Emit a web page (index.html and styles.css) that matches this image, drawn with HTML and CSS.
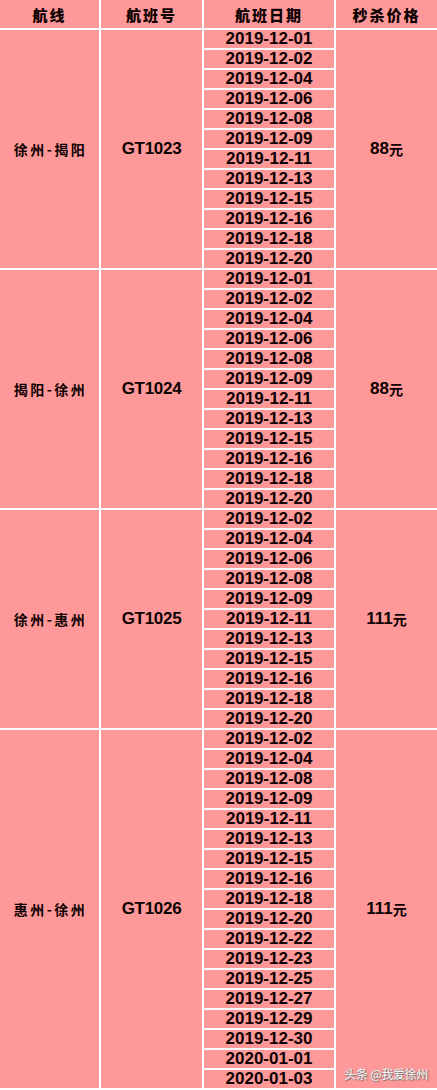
FILE: index.html
```html
<!DOCTYPE html>
<html lang="zh-CN">
<head>
<meta charset="utf-8">
<title>航线秒杀价格</title>
<link rel="stylesheet" href="styles.css">
</head>
<body>
<div class="table">
  <div class="row head">
    <div class="cell cn">航线</div>
    <div class="cell cn">航班号</div>
    <div class="cell cn">航班日期</div>
    <div class="cell cn">秒杀价格</div>
  </div>

  <div class="row">
    <div class="cell route">徐州-揭阳</div>
    <div class="cell num">GT1023</div>
    <div class="dates">
      <div class="date">2019-12-01</div>
      <div class="date">2019-12-02</div>
      <div class="date">2019-12-04</div>
      <div class="date">2019-12-06</div>
      <div class="date">2019-12-08</div>
      <div class="date">2019-12-09</div>
      <div class="date">2019-12-11</div>
      <div class="date">2019-12-13</div>
      <div class="date">2019-12-15</div>
      <div class="date">2019-12-16</div>
      <div class="date">2019-12-18</div>
      <div class="date">2019-12-20</div>
    </div>
    <div class="cell price">88<span class="yuan">元</span></div>
  </div>

  <div class="row">
    <div class="cell route">揭阳-徐州</div>
    <div class="cell num">GT1024</div>
    <div class="dates">
      <div class="date">2019-12-01</div>
      <div class="date">2019-12-02</div>
      <div class="date">2019-12-04</div>
      <div class="date">2019-12-06</div>
      <div class="date">2019-12-08</div>
      <div class="date">2019-12-09</div>
      <div class="date">2019-12-11</div>
      <div class="date">2019-12-13</div>
      <div class="date">2019-12-15</div>
      <div class="date">2019-12-16</div>
      <div class="date">2019-12-18</div>
      <div class="date">2019-12-20</div>
    </div>
    <div class="cell price">88<span class="yuan">元</span></div>
  </div>

  <div class="row">
    <div class="cell route">徐州-惠州</div>
    <div class="cell num">GT1025</div>
    <div class="dates">
      <div class="date">2019-12-02</div>
      <div class="date">2019-12-04</div>
      <div class="date">2019-12-06</div>
      <div class="date">2019-12-08</div>
      <div class="date">2019-12-09</div>
      <div class="date">2019-12-11</div>
      <div class="date">2019-12-13</div>
      <div class="date">2019-12-15</div>
      <div class="date">2019-12-16</div>
      <div class="date">2019-12-18</div>
      <div class="date">2019-12-20</div>
    </div>
    <div class="cell price">111<span class="yuan">元</span></div>
  </div>

  <div class="row">
    <div class="cell route">惠州-徐州</div>
    <div class="cell num">GT1026</div>
    <div class="dates">
      <div class="date">2019-12-02</div>
      <div class="date">2019-12-04</div>
      <div class="date">2019-12-08</div>
      <div class="date">2019-12-09</div>
      <div class="date">2019-12-11</div>
      <div class="date">2019-12-13</div>
      <div class="date">2019-12-15</div>
      <div class="date">2019-12-16</div>
      <div class="date">2019-12-18</div>
      <div class="date">2019-12-20</div>
      <div class="date">2019-12-22</div>
      <div class="date">2019-12-23</div>
      <div class="date">2019-12-25</div>
      <div class="date">2019-12-27</div>
      <div class="date">2019-12-29</div>
      <div class="date">2019-12-30</div>
      <div class="date">2020-01-01</div>
      <div class="date">2020-01-03</div>
    </div>
    <div class="cell price">111<span class="yuan">元</span></div>
  </div>

  <div class="watermark">头条 @我爱徐州</div>
</div>
</body>
</html>
```
FILE: styles.css
```css
html, body {
  margin: 0;
  padding: 0;
  background: #ffffff;
}

.table {
  position: relative;
  width: 437px;
  display: flex;
  flex-direction: column;
  gap: 2px;
  background: #ffffff;
  color: #0d0000;
  font-family: "Liberation Sans", Arial, "Noto Sans CJK SC", sans-serif;
  font-weight: bold;
}

.row {
  display: grid;
  grid-template-columns: 99px 101px 130px 101px;
  column-gap: 2px;
}

.head {
  height: 28px;
}

.cell {
  background: #ff9999;
  display: flex;
  align-items: center;
  justify-content: center;
}

.cn {
  font-family: "Noto Sans CJK SC", sans-serif;
  font-size: 15px;
  font-weight: 900;
  letter-spacing: 2px;
}

.route {
  font-family: "Noto Sans CJK SC", sans-serif;
  font-size: 14px;
  font-weight: 700;
  letter-spacing: 2.5px;
  padding-left: 2px;
}

.num, .price, .date {
  font-size: 17px;
}

.num {
  letter-spacing: -0.3px;
}

.yuan {
  font-family: "Noto Sans CJK SC", sans-serif;
  font-size: 14px;
}

.dates {
  display: flex;
  flex-direction: column;
  gap: 2px;
}

.date {
  height: 18px;
  line-height: 18px;
  background: #ff9999;
  text-align: center;
}

.watermark {
  position: absolute;
  right: 9px;
  bottom: 6px;
  font-family: "Noto Sans CJK SC", sans-serif;
  font-weight: 400;
  font-size: 12px;
  letter-spacing: -0.3px;
  color: #ffffff;
  text-shadow: 1px 1px 1px #666666, 0 0 1px #888888;
}
```
